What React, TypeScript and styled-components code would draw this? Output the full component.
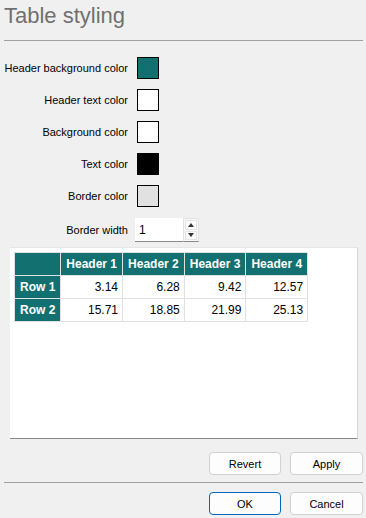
import React from "react"
import styled, { createGlobalStyle } from "styled-components"

const GlobalStyle = createGlobalStyle`
  html, body {
    margin: 0;
    padding: 0;
    background: #f0f0f0;
  }
  body {
    font-family: "Liberation Sans", Arial, sans-serif;
    font-size: 11px;
    color: #000;
  }
`

const fields = [
  { label: "Header background color", color: "#137070" },
  { label: "Header text color", color: "#ffffff" },
  { label: "Background color", color: "#ffffff" },
  { label: "Text color", color: "#000000" },
  { label: "Border color", color: "#e1e1e1" },
]

const headers = ["Header 1", "Header 2", "Header 3", "Header 4"]
const rows = [
  { name: "Row 1", values: ["3.14", "6.28", "9.42", "12.57"] },
  { name: "Row 2", values: ["15.71", "18.85", "21.99", "25.13"] },
]

export default function App(){
  return(
    <>
      <GlobalStyle />
      <Page>
        <Title>Table styling</Title>
        <Rule />
        <Form>
          {fields.map(f => (
            <React.Fragment key={f.label}>
              <Label>{f.label}</Label>
              <Swatch color={f.color} />
            </React.Fragment>
          ))}
          <Label>Border width</Label>
          <SpinBox>
            <SpinInput>1</SpinInput>
            <SpinButtons>
              <SpinButton><Arrow up /></SpinButton>
              <SpinButton><Arrow /></SpinButton>
            </SpinButtons>
          </SpinBox>
        </Form>
        <Preview>
          <Table>
            <thead>
              <tr>
                <HeadCell />
                {headers.map(h => <HeadCell key={h}>{h}</HeadCell>)}
              </tr>
            </thead>
            <tbody>
              {rows.map(r => (
                <tr key={r.name}>
                  <HeadCell>{r.name}</HeadCell>
                  {r.values.map(v => <Cell key={v}>{v}</Cell>)}
                </tr>
              ))}
            </tbody>
          </Table>
        </Preview>
        <ButtonRow>
          <Button>Revert</Button>
          <Button>Apply</Button>
        </ButtonRow>
        <Rule />
        <ButtonRow last>
          <Button primary>OK</Button>
          <Button>Cancel</Button>
        </ButtonRow>
      </Page>
    </>
  )
}

const Page = styled.div`
  width: 366px;
  height: 518px;
  box-sizing: border-box;
  padding: 0 3px 0 4px;
  display: flex;
  flex-direction: column;
`

const Title = styled.div`
  height: 40px;
  box-sizing: border-box;
  padding-top: 3px;
  font-size: 22px;
  color: #707070;
  white-space: nowrap;
`

const Rule = styled.div`
  height: 1px;
  background: #a0a0a0;
  flex-shrink: 0;
`

const Form = styled.div`
  display: grid;
  grid-template-columns: 124px auto;
  column-gap: 9px;
  row-gap: 10px;
  align-items: center;
  justify-content: start;
  margin-top: 16px;
`

const Label = styled.div`
  text-align: right;
  white-space: nowrap;
`

const Swatch = styled.div<{ color: string }>`
  width: 20px;
  height: 20px;
  border: 1px solid #000;
  background: ${p => p.color};
`

const SpinBox = styled.div`
  display: flex;
  margin-left: -2px;
  margin-top: 1px;
  height: 24px;
`

const SpinInput = styled.div`
  width: 48px;
  height: 24px;
  box-sizing: border-box;
  padding: 5px 0 0 4px;
  background: #fff;
  border-bottom: 1px solid #8a8a8a;
  font-size: 12px;
`

const SpinButtons = styled.div`
  display: flex;
  flex-direction: column;
  width: 16px;
  height: 24px;
  box-sizing: border-box;
  padding: 1px 0;
  gap: 1px;
  background: #f9f9f9;
  border: 1px solid #e2e2e2;
  border-bottom: 1px solid #8a8a8a;
`

const SpinButton = styled.div`
  flex: 1;
  display: flex;
  align-items: center;
  justify-content: center;
  background: #fdfdfd;
  border: 1px solid #e4e4e4;
  margin: 0 1px;
`

const Arrow = styled.div<{ up?: boolean }>`
  width: 0;
  height: 0;
  border-left: 3px solid transparent;
  border-right: 3px solid transparent;
  ${p => p.up ? "border-bottom: 4px solid #333;" : "border-top: 4px solid #333;"}
`

const Preview = styled.div`
  margin: 5px 5px 0 6px;
  height: 192px;
  box-sizing: border-box;
  background: #fff;
  border-top: 1px solid #e6e6e6;
  border-right: 1px solid #d9d9d9;
  border-bottom: 1px solid #8a8a8a;
  padding: 4px 0 0 4px;
`

const Table = styled.table`
  border-collapse: collapse;
  border: 1px solid #e1e1e1;
  font-size: 12px;
`

const HeadCell = styled.th`
  background: #137070;
  color: #fff;
  font-weight: bold;
  border: 1px solid #e1e1e1;
  height: 22px;
  padding: 0 5px;
  text-align: center;
  white-space: nowrap;
  &:first-child {
    width: 34px;
  }
`

const Cell = styled.td`
  border: 1px solid #e1e1e1;
  height: 22px;
  width: 52px;
  padding: 0 4px 0 0;
  text-align: right;
  color: #000;
`

const ButtonRow = styled.div<{ last?: boolean }>`
  display: flex;
  justify-content: flex-end;
  gap: 9px;
  margin: ${p => p.last ? "9px 0 0" : "13px 0 7px"};
`

const Button = styled.button<{ primary?: boolean }>`
  width: ${p => p.primary ? "72px" : "73px"};
  height: 23px;
  box-sizing: border-box;
  background: #fdfdfd;
  border: 1px solid ${p => p.primary ? "#0067c0" : "#d0d0d0"};
  border-radius: 4px;
  font-family: "Liberation Sans", Arial, sans-serif;
  font-size: 11px;
  color: #000;
  padding: 0;
  &:first-child {
    width: 72px;
  }
`
